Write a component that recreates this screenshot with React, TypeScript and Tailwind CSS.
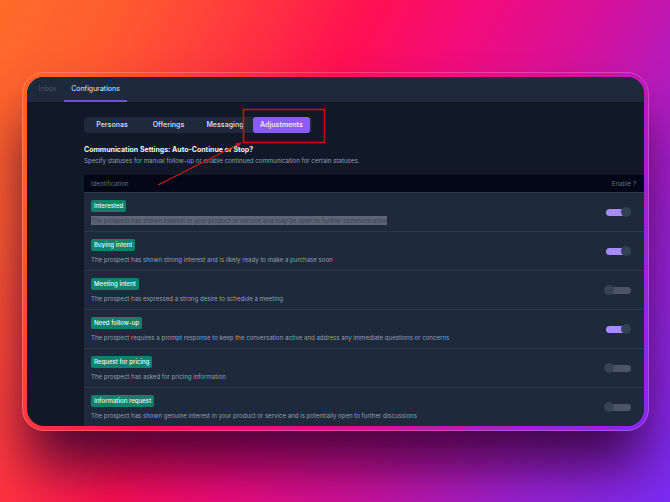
import React from "react";

type Row = { tag: string; desc: string; on: boolean; hl?: boolean };

const rows: Row[] = [
  { tag: "Interested", desc: "The prospect has shown interest in your product or service and may be open to further communication", on: true, hl: true },
  { tag: "Buying intent", desc: "The prospect has shown strong interest and is likely ready to make a purchase soon", on: true },
  { tag: "Meeting intent", desc: "The prospect has expressed a strong desire to schedule a meeting", on: false },
  { tag: "Need follow-up", desc: "The prospect requires a prompt response to keep the conversation active and address any immediate questions or concerns", on: true },
  { tag: "Request for pricing", desc: "The prospect has asked for pricing information", on: false },
  { tag: "Information request", desc: "The prospect has shown genuine interest in your product or service and is potentially open to further discussions", on: false },
];

function Toggle({ on }: { on: boolean }) {
  return (
    <div className="relative w-[27px] h-[10px] shrink-0">
      <div
        className={
          on
            ? "absolute left-[2px] right-[1px] top-[1.5px] h-[7px] rounded-full bg-[#a78bfa]"
            : "absolute left-[2px] right-0 top-[1.5px] h-[7px] rounded-full bg-[#4b5565]"
        }
      />
      <div
        className={
          on
            ? "absolute right-0 top-0 w-[10px] h-[10px] rounded-full bg-[#334155]"
            : "absolute left-0 top-0 w-[10px] h-[10px] rounded-full bg-[#374253]"
        }
      />
    </div>
  );
}

export default function App() {
  return (
    <div
      className="relative w-[670px] h-[502px] overflow-hidden bg-[linear-gradient(118deg,#ff6c2a_0%,#ff5a30_14%,#ff3440_28%,#ff1052_40%,#f20c7c_52%,#d2129e_66%,#9e22d6_83%,#7b2cf5_100%)] pl-[22px] pt-[72px]"
      style={{ fontFamily: "Inter, 'Noto Sans', sans-serif" }}
    >
      <div className="w-[627px] h-[359px] rounded-[22px] border border-white/20 p-[4px] shadow-[0_40px_56px_-6px_rgba(45,0,45,0.85)]">
        <div className="w-full h-full rounded-[17px] overflow-hidden flex flex-col bg-[#111827]">
          {/* header */}
          <div className="h-[25px] shrink-0 bg-[#1e293b] flex items-stretch pl-[4px]">
            <div className="w-[33px] flex items-center justify-center text-[7px] text-[#4b5563]">Inbox</div>
            <div className="w-[63px] flex items-center justify-center text-[7px] text-[#e5e7eb] border-b-2 border-[#6d4fd8]">
              <span className="mt-[2px]">Configurations</span>
            </div>
          </div>
          {/* body */}
          <div className="flex-1 pl-[57px] pt-[15px] flex flex-col min-h-0">
            <div className="flex self-start h-[18px] bg-[#1e293b] rounded-[4px] pr-[2px]">
              <div className="w-[56px] flex items-center justify-center text-[7px] font-semibold text-[#cbd5e1]">Personas</div>
              <div className="w-[57px] flex items-center justify-center text-[7px] font-semibold text-[#cbd5e1]">Offerings</div>
              <div className="w-[56px] flex items-center justify-center text-[7px] font-semibold text-[#cbd5e1]">Messaging</div>
              <div className="w-[57px] flex items-center justify-center text-[7px] font-semibold text-[#ede9fe] bg-[#8b5cf6] rounded-[3px]">Adjustments</div>
            </div>
            <div className="mt-[11px] text-[7px] leading-[11px] font-bold text-[#f1f5f9]">
              Communication Settings: Auto-Continue or Stop?
            </div>
            <div className="text-[6.15px] leading-[11px] text-[#94a3b8]">
              Specify statuses for manual follow-up or enable continued communication for certain statuses.
            </div>
            <div className="mt-[9px] flex flex-col">
              <div className="h-[17px] shrink-0 bg-[#020617] flex items-center justify-between pl-[7px] pr-[8px] text-[6.1px] text-[#64748b]">
                <span>Identification</span>
                <span>Enable ?</span>
              </div>
              {rows.map((r, i) => (
                <div
                  key={i}
                  className="h-[39px] shrink-0 bg-[#1e293b] border-t border-[#2b3649] first:border-t-0 flex items-center justify-between pl-[7px] pr-[13px]"
                >
                  <div className="flex flex-col items-start">
                    <span className="h-[12px] px-[3px] flex items-center rounded-[2px] bg-[#11806d] text-[6.1px] font-medium text-[#e6fffa]">
                      {r.tag}
                    </span>
                    <span
                      className={
                        r.hl
                          ? "mt-[4px] text-[6.1px] leading-[9px] bg-[#5d6676] text-[#363f4e]"
                          : "mt-[4px] text-[6.1px] leading-[9px] text-[#94a0b2]"
                      }
                    >
                      {r.desc}
                    </span>
                  </div>
                  <Toggle on={r.on} />
                </div>
              ))}
            </div>
          </div>
        </div>
      </div>
      {/* annotation overlay */}
      <svg className="absolute left-0 top-0 pointer-events-none" width="670" height="502" viewBox="0 0 670 502">
        <rect x="243.5" y="109.5" width="81" height="33" fill="none" stroke="#d60a0a" strokeWidth="1.6" />
        <line x1="158" y1="185" x2="239" y2="144" stroke="#e01010" strokeWidth="1.3" />
        <polygon points="242,142.5 235.5,143.2 237.8,147.3" fill="#e01010" />
      </svg>
    </div>
  );
}
